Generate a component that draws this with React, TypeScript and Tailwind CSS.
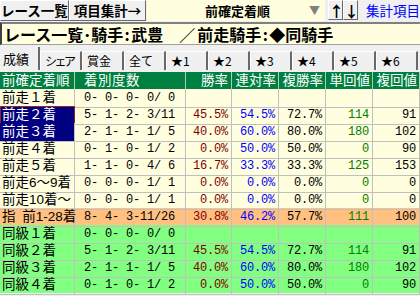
type Row = {
  label: string;
  counts: string;
  win?: string;
  ren?: string;
  fuku?: string;
  tan?: string;
  fukuKai?: string;
  tone: 'plain' | 'sel' | 'selFocus' | 'total' | 'same';
};

const rows: Row[] = [
  { label: '前走１着', counts: '0- 0- 0- 0/ 0', tone: 'plain' },
  { label: '前走２着', counts: '5- 1- 2- 3/11', win: '45.5%', ren: '54.5%', fuku: '72.7%', tan: '114', fukuKai: '91', tone: 'selFocus' },
  { label: '前走３着', counts: '2- 1- 1- 1/ 5', win: '40.0%', ren: '60.0%', fuku: '80.0%', tan: '180', fukuKai: '102', tone: 'sel' },
  { label: '前走４着', counts: '0- 1- 0- 1/ 2', win: '0.0%', ren: '50.0%', fuku: '50.0%', tan: '0', fukuKai: '90', tone: 'plain' },
  { label: '前走５着', counts: '1- 1- 0- 4/ 6', win: '16.7%', ren: '33.3%', fuku: '33.3%', tan: '125', fukuKai: '153', tone: 'plain' },
  { label: '前走6～9着', counts: '0- 0- 0- 1/ 1', win: '0.0%', ren: '0.0%', fuku: '0.0%', tan: '0', fukuKai: '0', tone: 'plain' },
  { label: '前走10着～', counts: '0- 0- 0- 1/ 1', win: '0.0%', ren: '0.0%', fuku: '0.0%', tan: '0', fukuKai: '0', tone: 'plain' },
  { label: '指\u2002前1-28着', counts: '8- 4- 3-11/26', win: '30.8%', ren: '46.2%', fuku: '57.7%', tan: '111', fukuKai: '100', tone: 'total' },
  { label: '同級１着', counts: '0- 0- 0- 0/ 0', tone: 'same' },
  { label: '同級２着', counts: '5- 1- 2- 3/11', win: '45.5%', ren: '54.5%', fuku: '72.7%', tan: '114', fukuKai: '91', tone: 'same' },
  { label: '同級３着', counts: '2- 1- 1- 1/ 5', win: '40.0%', ren: '60.0%', fuku: '80.0%', tan: '180', fukuKai: '102', tone: 'same' },
  { label: '同級４着', counts: '0- 1- 0- 1/ 2', win: '0.0%', ren: '50.0%', fuku: '50.0%', tan: '0', fukuKai: '90', tone: 'same' },
];

const tabs = ['シェア', '賞金', '全て', '★1', '★2', '★3', '★4', '★5', '★6'];

const grid = 'grid grid-cols-[75px_111px_46px_47px_47px_47px_47px]';
const mono = "font-['Liberation_Mono','Noto_Sans_CJK_JP',monospace] text-[12px] tracking-[-0.2px] whitespace-pre";
const cellFont = "font-['Liberation_Sans','Noto_Sans_CJK_JP',sans-serif]";
const raised = 'border-t border-l border-white border-r border-b border-r-[#696969] border-b-[#696969] bg-[#f0f0f0]';

function rowBg(tone: Row['tone']) {
  if (tone === 'total') return 'bg-[#ffc080]';
  if (tone === 'same') return 'bg-[#80ff80]';
  return 'bg-[#ffffe0]';
}

function NumCell({ value, color }: { value?: string; color: string }) {
  return (
    <div className={`flex items-center justify-end border-r border-b border-[#c0c0c0] pr-[3px] ${mono} ${color}`}>
      {value ?? ''}
    </div>
  );
}

function Colon() {
  return <span className="inline-block w-[8px] text-center">:</span>;
}

export default function App() {
  return (
    <div className="h-[296px] w-[420px] overflow-hidden bg-[#f0f0f0] font-['Noto_Sans_CJK_JP',sans-serif] text-black">
      {/* toolbar */}
      <div className="flex h-[21px] items-stretch">
        <button className={`w-[73px] whitespace-nowrap text-[13.5px] font-bold leading-none ${raised}`}>
          レース一覧
        </button>
        <button className={`w-[83px] whitespace-nowrap text-[13.5px] font-bold leading-none ${raised}`}>
          項目集計→
        </button>
        <div className="ml-[1px] flex w-[187px] items-center bg-[#ffffe0] pl-[58px] pr-[5px]">
          <span className="whitespace-nowrap text-[13px] font-bold leading-none">前確定着順</span>
          <span className="ml-auto text-[11px] leading-none text-[#808080]">▼</span>
        </div>
        <div className="ml-[3px] flex h-[20px]">
          <button className={`w-[15px] text-[15px] font-bold leading-none ${raised}`}>↑</button>
          <button className={`w-[15px] text-[15px] font-bold leading-none ${raised}`}>↓</button>
        </div>
        <span className="ml-[8px] flex items-center whitespace-nowrap text-[13.5px] leading-none text-[#0000ff]">集計項目</span>
      </div>

      {/* title box */}
      <div className="mt-[1px] flex h-[23px] items-center whitespace-pre border-t-2 border-l-2 border-t-[#808080] border-l-[#404040] border-b border-b-[#a0a0a0] bg-[#ffffe0] pl-[2px] text-[16px] font-bold leading-none">
        <span>レース一覧･騎手</span>
        <Colon />
        <span>武豊　／</span>
        <span className="ml-[2px]">前走騎手</span>
        <Colon />
        <span>◆同騎手</span>
      </div>

      {/* tabs */}
      <div className="mt-[2px] flex h-[23px] items-end">
        <div className="flex h-[23px] w-[40px] items-center border-r-2 border-r-[#696969] pl-[3px] text-[13px] leading-none">成績</div>
        {tabs.map((t) => (
          <div
            key={t}
            className={`flex h-[19px] w-[42px] items-center overflow-hidden whitespace-nowrap border-t border-l border-t-white border-l-white border-r-2 border-r-[#696969] bg-[#f0f0f0] pl-[4px] text-[12px] leading-none ${
              t === 'シェア' ? 'tracking-[-2.5px]' : ''
            }`}
          >
            {t}
          </div>
        ))}
      </div>

      {/* table */}
      <div className="mt-[2px] w-[420px]">
        <div className={`${grid} ${cellFont} h-[17px] bg-[#008040] text-[13.5px] leading-none text-white`}>
          <div className="flex items-center whitespace-nowrap border-r border-[#c0c0c0] pl-[2px]">前確定着順</div>
          <div className="flex items-center border-r border-[#c0c0c0] pl-[9px] tracking-[0.5px]">着別度数</div>
          <div className="flex items-center justify-end border-r border-[#c0c0c0] pr-[3px]">勝率</div>
          <div className="flex items-center justify-end border-r border-[#c0c0c0] pr-[2px]">連対率</div>
          <div className="flex items-center justify-end border-r border-[#c0c0c0] pr-[2px]">複勝率</div>
          <div className="flex items-center justify-end border-r border-[#c0c0c0] pr-[2px]">単回値</div>
          <div className="flex items-center justify-end border-r border-[#c0c0c0] pr-[2px]">複回値</div>
        </div>
        {rows.map((r) => {
          const sel = r.tone === 'sel' || r.tone === 'selFocus';
          return (
            <div key={r.label} className={`${grid} h-[17px] ${rowBg(r.tone)}`}>
              <div
                className={`flex items-center whitespace-pre border-r border-b border-[#c0c0c0] pl-[2px] text-[13.5px] leading-none ${cellFont} ${
                  sel ? 'bg-[#000080] text-white' : ''
                } ${r.tone === 'selFocus' ? 'outline outline-1 -outline-offset-1 outline-[#a02020]' : ''}`}
              >
                {r.label}
              </div>
              <div className={`flex items-center border-r border-b border-[#c0c0c0] pl-[9px] ${mono}`}>{r.counts}</div>
              <NumCell value={r.win} color="text-[#800000]" />
              <NumCell value={r.ren} color="text-[#0000ff]" />
              <NumCell value={r.fuku} color="text-black" />
              <NumCell value={r.tan} color="text-[#008000]" />
              <NumCell value={r.fukuKai} color="text-black" />
            </div>
          );
        })}
      </div>
    </div>
  );
}
